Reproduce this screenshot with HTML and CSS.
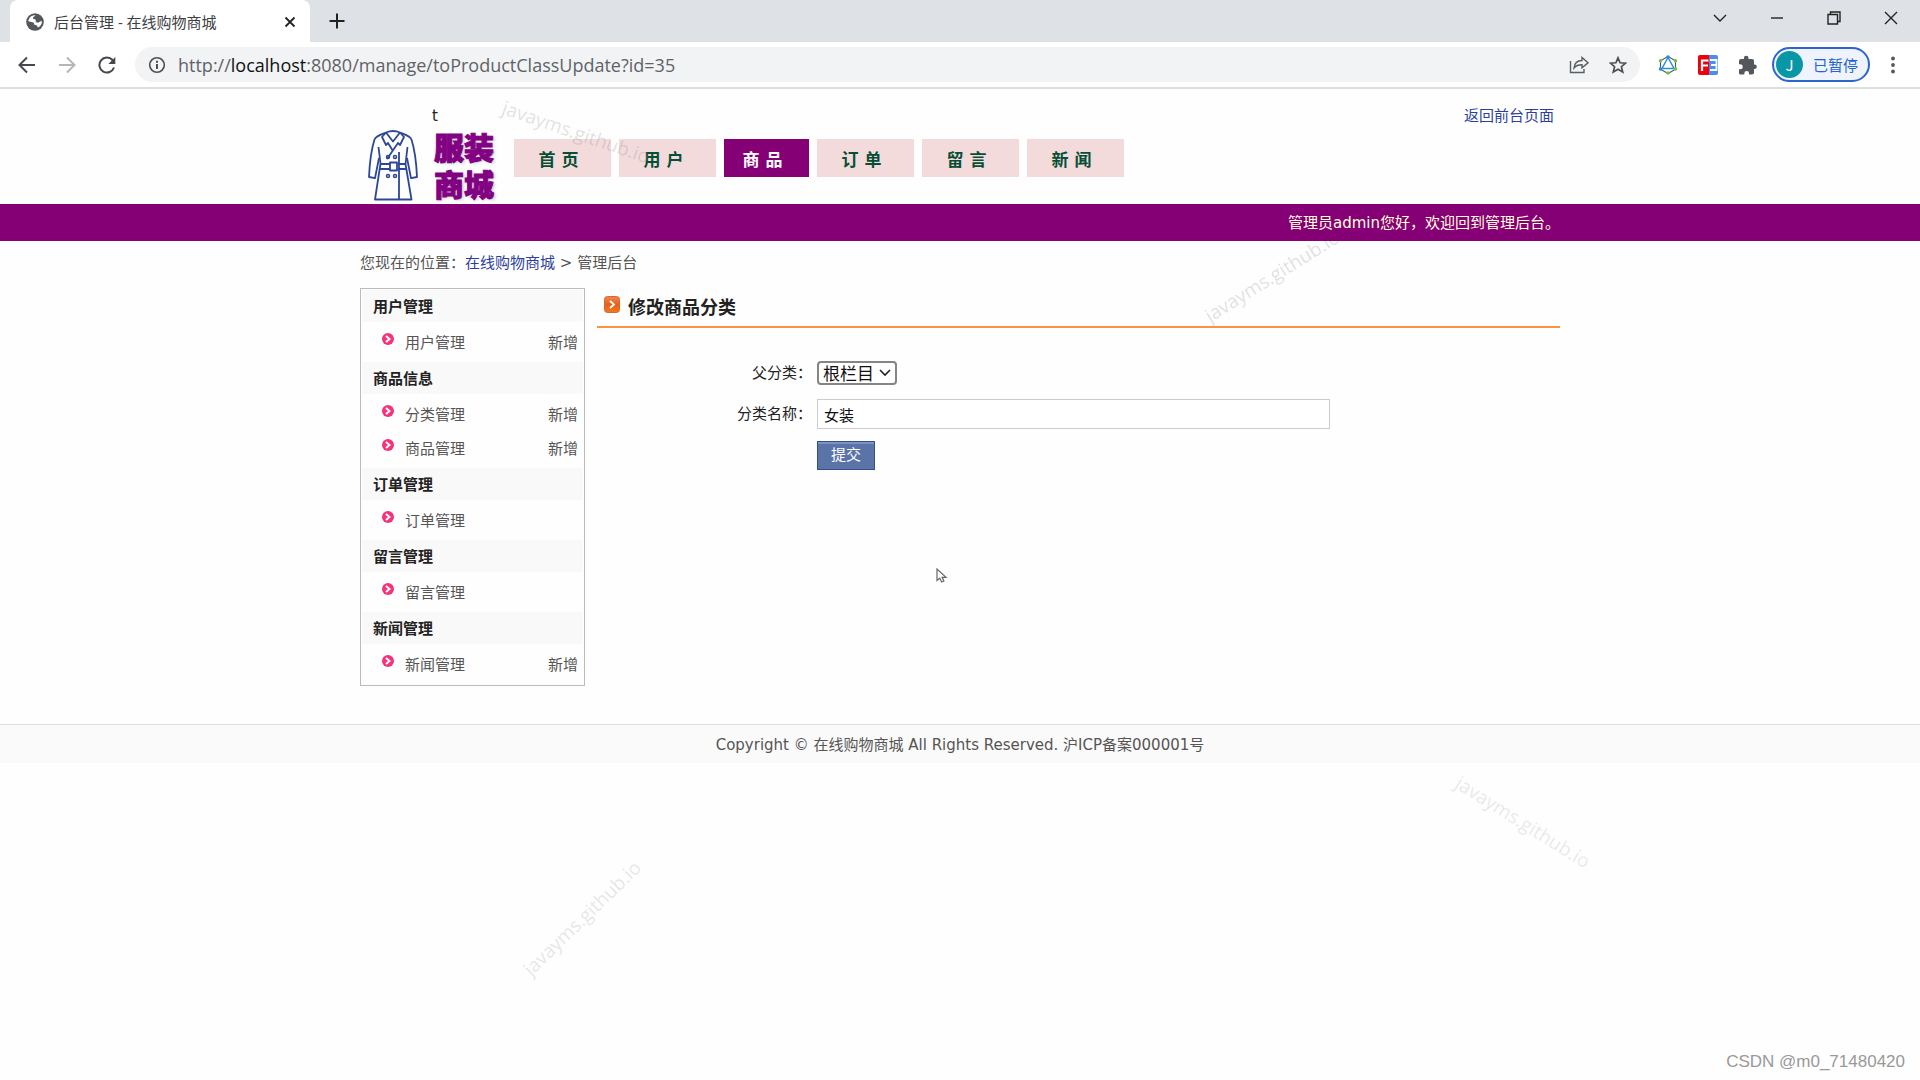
FILE: index.html
```html
<!DOCTYPE html>
<html lang="zh-CN">
<head>
<meta charset="utf-8">
<title>后台管理 - 在线购物商城</title>
<link rel="stylesheet" href="styles.css">
</head>
<body>
<svg class="sprite" aria-hidden="true">
  <symbol id="bullet" viewBox="0 0 12 12">
    <circle cx="6" cy="6" r="6" fill="#f5327d"/>
    <path d="M4 3l3.500 3L4 9" fill="none" stroke="#fff" stroke-width="2"/>
  </symbol>
</svg>

<div class="browser">
  <div class="tabstrip">
    <div class="tab">
      <svg class="favicon" width="18" height="18" viewBox="0 0 18 18"><circle cx="9" cy="9" r="8.800" fill="#54585d"/><path d="M9.500 2.200c-1 1.500-2.800 1.500-2.500 3 .5 1.300 2 .6 2.600 1.600.6 1.300-.4 1.900.6 2.500 1.300.6 2.600.3 3.500-.6.6-.6 1.400-.6 2.300-.3-.1 2.600-1.500 5-4 6.200-.9-.6-.4-1.600-1.300-2.300-.9-.6-2.500.1-2.500-1.400 0-1.300-1.600-1.500-2.700-1.900L2.300 8.300c.2-3.600 3.600-6.600 7.200-6.100z" fill="#fff"/></svg>
      <span class="tab-title">后台管理 - 在线购物商城</span>
      <button class="icon-btn" aria-label="关闭标签页"><svg width="12" height="12" viewBox="0 0 12 12"><path d="M1.500 1.500l9 9m0-9l-9 9" stroke="#222" stroke-width="1.800"/></svg></button>
    </div>
    <button class="icon-btn new-tab" aria-label="新标签页"><svg width="16" height="16" viewBox="0 0 16 16"><path d="M8 0.500v15M0.500 8h15" stroke="#222" stroke-width="2"/></svg></button>
    <div class="window-controls">
      <button class="icon-btn" aria-label="搜索标签页"><svg width="14" height="14" viewBox="0 0 14 14"><path d="M1 4l6 6 6-6" fill="none" stroke="#222" stroke-width="1.400"/></svg></button>
      <button class="icon-btn" aria-label="最小化"><svg width="14" height="14" viewBox="0 0 14 14"><path d="M1 7h12" stroke="#222" stroke-width="1.400"/></svg></button>
      <button class="icon-btn" aria-label="还原"><svg width="14" height="14" viewBox="0 0 14 14"><path d="M1 3.500h9.500V13H1zM3.500 3.500V1H13v9.500h-2.500" fill="none" stroke="#222" stroke-width="1.400"/></svg></button>
      <button class="icon-btn" aria-label="关闭"><svg width="14" height="14" viewBox="0 0 14 14"><path d="M1 1l12 12M13 1L1 13" stroke="#222" stroke-width="1.400"/></svg></button>
    </div>
  </div>
  <div class="toolbar">
    <button class="icon-btn nav-btn" aria-label="后退"><svg width="18" height="18" viewBox="0 0 18 18"><path d="M17 9H2M9 1.500L1.500 9 9 16.500" fill="none" stroke="#45484c" stroke-width="2"/></svg></button>
    <button class="icon-btn nav-btn" aria-label="前进"><svg width="18" height="18" viewBox="0 0 18 18"><path d="M1 9h15M9 1.500L16.500 9 9 16.500" fill="none" stroke="#b4b6b9" stroke-width="2"/></svg></button>
    <button class="icon-btn nav-btn" aria-label="刷新"><svg width="18" height="18" viewBox="0 0 18 18"><path d="M16 11.500A7.500 7.500 0 1 1 14.500 4L16 6" fill="none" stroke="#45484c" stroke-width="2"/><path d="M17.300 1v7h-7z" fill="#45484c"/></svg></button>
    <div class="omnibox">
      <svg width="18" height="18" viewBox="0 0 18 18"><circle cx="9" cy="9" r="7.300" fill="none" stroke="#4c5054" stroke-width="1.600"/><path d="M9 8v5M9 4.700v2" stroke="#4c5054" stroke-width="2"/></svg>
      <span class="url">http://<b>localhost</b>:8080/manage/toProductClassUpdate?id=35</span>
      <button class="icon-btn" aria-label="分享"><svg width="20" height="18" viewBox="0 0 20 18"><path d="M1.500 5v11.500H15V13M5 12c.5-5 3-7.500 8-7.500V1.500L19 6.800l-6 5v-3C9.500 8.800 7 9.500 5 12z" fill="none" stroke="#5a5e63" stroke-width="1.400"/></svg></button>
      <button class="icon-btn" aria-label="收藏"><svg width="18" height="18" viewBox="0 0 18 18"><path d="M9 1.800l2.100 5 5.400.4-4.100 3.500 1.300 5.300L9 13.200 4.300 16l1.300-5.300L1.500 7.200l5.400-.4z" fill="none" stroke="#4c5054" stroke-width="1.700"/></svg></button>
    </div>
    <div class="extensions">
      <button class="icon-btn" aria-label="扩展一"><svg width="20" height="20" viewBox="0 0 20 20"><path d="M10 1.500l7.500 4.300v8.400L10 18.500l-7.500-4.300V5.800z" fill="#fff" stroke="#555f66" stroke-width="1.200"/><path d="M10 2.500L4 13.500h12z" fill="none" stroke="#2b8fe0" stroke-width="1.500"/><g fill="#2b8fe0"><circle cx="10" cy="2" r="1.800"/></g><g fill="#7ac142"><circle cx="2.500" cy="5.800" r="1.800"/><circle cx="17.500" cy="5.800" r="1.800"/><circle cx="17.500" cy="14" r="1.800"/><circle cx="10" cy="18" r="1.800"/></g><circle cx="2.500" cy="14" r="1.800" fill="#2b8fe0"/></svg></button>
      <button class="icon-btn" aria-label="扩展二"><svg width="20" height="20" viewBox="0 0 20 20"><path d="M2 0h9v20H2a2 2 0 0 1-2-2V2a2 2 0 0 1 2-2z" fill="#f00008"/><path d="M11 0h7a2 2 0 0 1 2 2v16a2 2 0 0 1-2 2h-7z" fill="#4a8cf0"/><path d="M4 16V5.500h6.500M4 10.500h6" fill="none" stroke="#fff" stroke-width="2.200"/><path d="M12 5h6.500v10H12M13 10h5.500" fill="none" stroke="#fff" stroke-width="1.800"/></svg></button>
      <button class="icon-btn" aria-label="扩展程序"><svg width="20" height="20" viewBox="0 0 20 20"><path d="M17 9.500h-1V6a2 2 0 0 0-2-2h-3.500V3a2.300 2.300 0 0 0-4.600 0v1H3a2 2 0 0 0-2 2v3.300h1.200a2.500 2.500 0 0 1 0 5H1V18a1.500 1.500 0 0 0 1.500 1.500h3.800v-1a2.400 2.400 0 0 1 4.800 0v1H14a2 2 0 0 0 2-2V14h1a2.300 2.300 0 0 0 0-4.500z" fill="#54585d"/></svg></button>
    </div>
    <button class="profile"><span class="avatar">J</span><span>已暂停</span></button>
    <button class="icon-btn menu-btn" aria-label="菜单"><svg width="4" height="18" viewBox="0 0 4 18"><g fill="#54585d"><circle cx="2" cy="2.500" r="1.900"/><circle cx="2" cy="9" r="1.900"/><circle cx="2" cy="15.500" r="1.900"/></g></svg></button>
  </div>
</div>

<header class="site-header">
  <div class="container header-row">
    <div class="brand">
      <div class="brand-note">t</div>
      <div class="logo">
        <svg width="50" height="72" viewBox="0 0 50 72" fill="none" stroke="#2d4796" stroke-width="1.800" stroke-linejoin="round">
          <path d="M18 2.500C12 5 8 6 6.500 9.500 3.500 19 1.500 36 1 47l6 1.200L11 28M32 2.500c6 2.500 10 3.500 11.500 7C46.500 19 48.500 36 49 47l-6 1.200L39 28"/>
          <path d="M18 2.500L14 7l4 8 2-2 5 8M32 2.500L36 7l-4 8-2-2-11 16M18 2.500q7-3 14 0M18 2.500l7 9 7-9M10.500 17l2 16.500L7 69.500h36.500L37.500 34l2-17M31 22v47.500M12 34h10M30 34h8M12 39h10M30 39h8"/>
          <path d="M22 32.500h7v8h-7z"/>
          <g stroke-width="1.500"><circle cx="20" cy="27" r="1.500"/><circle cx="27" cy="27" r="1.500"/><circle cx="20" cy="46" r="1.500"/><circle cx="27" cy="46" r="1.500"/></g>
        </svg>
        <div class="logo-text">服装<br>商城</div>
      </div>
    </div>
    <nav class="main-nav">
      <a href="#">首 页</a>
      <a href="#">用 户</a>
      <a href="#" class="active">商 品</a>
      <a href="#">订 单</a>
      <a href="#">留 言</a>
      <a href="#">新 闻</a>
    </nav>
    <a class="front-link" href="#">返回前台页面</a>
  </div>
</header>
<div class="welcome"><div class="container">管理员admin您好，欢迎回到管理后台。</div></div>

<div class="container breadcrumb">您现在的位置：<a href="#">在线购物商城</a> &gt; 管理后台</div>

<div class="container columns">
  <aside class="sidebar">
    <h2>用户管理</h2>
    <ul><li><svg><use href="#bullet"/></svg><a href="#">用户管理</a><a class="add" href="#">新增</a></li></ul>
    <h2>商品信息</h2>
    <ul>
      <li><svg><use href="#bullet"/></svg><a href="#">分类管理</a><a class="add" href="#">新增</a></li>
      <li><svg><use href="#bullet"/></svg><a href="#">商品管理</a><a class="add" href="#">新增</a></li>
    </ul>
    <h2>订单管理</h2>
    <ul><li><svg><use href="#bullet"/></svg><a href="#">订单管理</a></li></ul>
    <h2>留言管理</h2>
    <ul><li><svg><use href="#bullet"/></svg><a href="#">留言管理</a></li></ul>
    <h2>新闻管理</h2>
    <ul><li><svg><use href="#bullet"/></svg><a href="#">新闻管理</a><a class="add" href="#">新增</a></li></ul>
  </aside>
  <main class="content">
    <h1>
      <svg width="16" height="17" viewBox="0 0 16 17"><defs><linearGradient id="og" x1="0" y1="0" x2="0" y2="1"><stop offset="0" stop-color="#f0894c"/><stop offset=".5" stop-color="#e8601c"/><stop offset="1" stop-color="#f07a1e"/></linearGradient></defs><rect x=".5" y=".5" width="15" height="16" rx="3" fill="url(#og)" stroke="#d9682c"/><path d="M6 5l4 3.500L6 12" fill="none" stroke="#fff" stroke-width="1.800"/></svg>
      修改商品分类
    </h1>
    <form class="form">
      <label for="parent">父分类：</label>
      <div class="field"><span class="select-wrap"><select id="parent"><option>根栏目</option></select><svg width="12" height="8" viewBox="0 0 12 8"><path d="M1 1l5 5 5-5" fill="none" stroke="#222" stroke-width="1.600"/></svg></span></div>
      <label for="name">分类名称：</label>
      <div class="field"><input id="name" type="text" value="女装"></div>
      <div class="field submit-field"><button type="button" class="submit">提交</button></div>
    </form>
  </main>
</div>

<footer class="site-footer">Copyright © 在线购物商城 All Rights Reserved. 沪ICP备案000001号</footer>

<div class="overlay">
  <span class="mark mark-a">javayms.github.io</span>
  <span class="mark mark-b">javayms.github.io</span>
  <span class="mark mark-c">javayms.github.io</span>
  <span class="mark mark-d">javayms.github.io</span>
  <svg class="cursor" width="12" height="16" viewBox="0 0 12 16"><path d="M1 1v11.500l2.700-2.300 2 3.800 2.200-1-1.800-3.700H10z" fill="#fff" stroke="#666" stroke-width="1.200"/></svg>
  <span class="credit">CSDN @m0_71480420</span>
</div>
</body>
</html>
```
FILE: styles.css
```css
* { box-sizing: border-box; }
body {
  margin: 0;
  min-height: 100vh;
  position: relative;
  background: #fefefe;
  color: #222;
  font: 15px/24px "DejaVu Sans", "Noto Sans CJK SC", sans-serif;
}
a { color: inherit; text-decoration: none; }
h1, h2, ul { margin: 0; padding: 0; }
ul { list-style: none; }
.sprite { display: none; }
.container { width: 100%; max-width: 1200px; margin: 0 auto; }

/* browser window */
.browser { font-family: "Open Sans", "Noto Sans CJK SC", sans-serif; }
.icon-btn {
  display: flex;
  align-items: center;
  justify-content: center;
  padding: 0;
  border: 0;
  background: none;
}
.tabstrip { display: flex; height: 42px; padding-left: 10px; background: #dee1e6; }
.tab {
  display: flex;
  align-items: center;
  gap: 10px;
  width: 300px;
  padding: 2px 14px 0 16px;
  border-radius: 8px 8px 0 0;
  background: #fff;
  color: #3c4043;
}
.tab-title { flex: 1; }
.new-tab { padding: 0 19px; }
.window-controls { display: flex; margin-left: auto; padding: 0 1px 6px 0; }
.window-controls .icon-btn { width: 57px; }
.toolbar {
  display: flex;
  align-items: center;
  height: 47px;
  padding-left: 7px;
  border-bottom: 2px solid #dcdee0;
  background: #fff;
}
.nav-btn { width: 40px; }
.omnibox {
  display: flex;
  flex: 1;
  align-items: center;
  gap: 20px;
  height: 35px;
  margin-left: 8px;
  padding: 0 13px;
  border-radius: 18px;
  background: #f1f3f4;
}
.url { flex: 1; margin-left: -8px; color: #5f6368; font-size: 18px; white-space: nowrap; }
.url b { color: #111; font-weight: 400; }
.extensions { display: flex; gap: 20px; margin: 0 14px 0 18px; }
.profile {
  display: flex;
  align-items: center;
  gap: 10px;
  height: 35px;
  padding: 0 10px 0 2px;
  border: 2px solid #2b66cf;
  border-radius: 18px;
  background: #eef3fd;
  color: #2563d0;
  font: 15px/24px "Noto Sans CJK SC", sans-serif;
}
.avatar {
  width: 27px;
  height: 27px;
  border-radius: 50%;
  background: #0797a7;
  color: #fff;
  line-height: 27px;
  text-align: center;
}
.menu-btn { width: 46px; margin-right: 4px; }

/* site header */
.header-row { display: flex; align-items: flex-start; height: 115px; }
.brand { width: 154px; padding-top: 15px; }
.brand-note { padding-left: 72px; }
.logo { display: flex; gap: 16px; padding-left: 8px; }
.logo svg { margin-top: 2px; }
.logo-text {
  color: #820082;
  font: 900 30px/37px "Noto Sans CJK SC", sans-serif;
  text-shadow: 2px 1px 3px #c8c8c8;
  -webkit-text-stroke: 1px #820082;
}
.main-nav { display: flex; gap: 8px; padding-top: 50px; }
.main-nav a {
  width: 97px;
  padding: 5px 8px 0 0;
  background: #f3dbdb;
  color: #064f36;
  font-size: 17px;
  font-weight: 700;
  line-height: 33px;
  text-align: center;
}
.main-nav .active { width: 85px; background: #850075; color: #fff; }
.front-link { margin-left: auto; padding: 15px 6px 0 0; color: #2d3f9e; }
.welcome { padding-top: 2px; background: #850075; color: #ffd; line-height: 35px; text-align: right; }
.breadcrumb { padding: 10px 0 13px; color: #555; }
.breadcrumb a { color: #2d3f9e; }

/* page body */
.columns { display: flex; align-items: flex-start; gap: 12px; }
.sidebar { width: 225px; padding: 1px; border: 1px solid #bbb; }
.sidebar h2 {
  padding: 2px 0 0 11px;
  background: #f9f9f9;
  font-size: 15px;
  line-height: 30px;
}
.sidebar ul { padding: 3px 0; }
.sidebar li {
  display: flex;
  padding: 2px 5px 0 20px;
  color: #555;
  line-height: 32px;
}
.sidebar svg { width: 12px; height: 12px; margin: 6px 11px 0 0; }
.add { margin-left: auto; }
.content { flex: 1; }
.content h1 {
  display: flex;
  gap: 8px;
  padding: 2px 0 0 7px;
  border-bottom: 2px solid #fb9440;
  font-size: 18px;
  line-height: 36px;
}
.content h1 svg { margin-top: 6px; }
.form {
  display: grid;
  grid-template-columns: 215px 1fr;
  gap: 11px 5px;
  align-items: center;
  padding-top: 30px;
}
.form label { text-align: right; }
.field { display: flex; height: 30px; align-items: center; }
.submit-field { grid-column: 2; }
.select-wrap { display: grid; align-items: center; }
.select-wrap > * { grid-area: 1 / 1; }
.select-wrap svg { justify-self: end; margin-right: 6px; pointer-events: none; }
select {
  appearance: none;
  width: 80px;
  height: 24px;
  padding: 0 4px;
  border: 2px solid #858585;
  border-radius: 4px;
  background: #fff;
  color: #111;
  font: 17px/20px "Noto Sans CJK SC", sans-serif;
}
input {
  width: 100%;
  max-width: 513px;
  height: 30px;
  padding: 0 6px;
  border: 1px solid #ccc;
  background: #fff;
  color: #111;
  font: inherit;
}
.submit {
  height: 29px;
  padding: 0 13px;
  border: 1px solid #34508c;
  background: #5b74a8;
  box-shadow: inset 0 2px #7d92bf;
  color: #fff;
  font: inherit;
}
.site-footer {
  margin-top: 38px;
  padding-top: 2px;
  border-top: 1px solid #ddd;
  background: #fafafa;
  color: #555;
  line-height: 36px;
  text-align: center;
}

/* marks lying over the page */
.overlay { position: absolute; inset: 0; overflow: hidden; pointer-events: none; }
.mark {
  position: absolute;
  color: rgba(120, 120, 120, .22);
  font: 19px/24px "Open Sans", sans-serif;
  transform: translate(-50%, -50%) rotate(var(--turn));
}
.mark-a { left: 576px; top: 132px; --turn: 19deg; }
.mark-b { left: 1272px; top: 276px; --turn: -32deg; z-index: -1; }
.mark-c { left: 1523px; top: 822px; --turn: 32deg; opacity: .7; }
.mark-d { left: 582px; top: 918px; --turn: -44deg; opacity: .8; }
.cursor { position: absolute; left: 936px; top: 568px; }
.credit {
  position: absolute;
  right: 15px;
  bottom: 6px;
  color: #999;
  font: 17px/24px "Liberation Sans", sans-serif;
}
```
